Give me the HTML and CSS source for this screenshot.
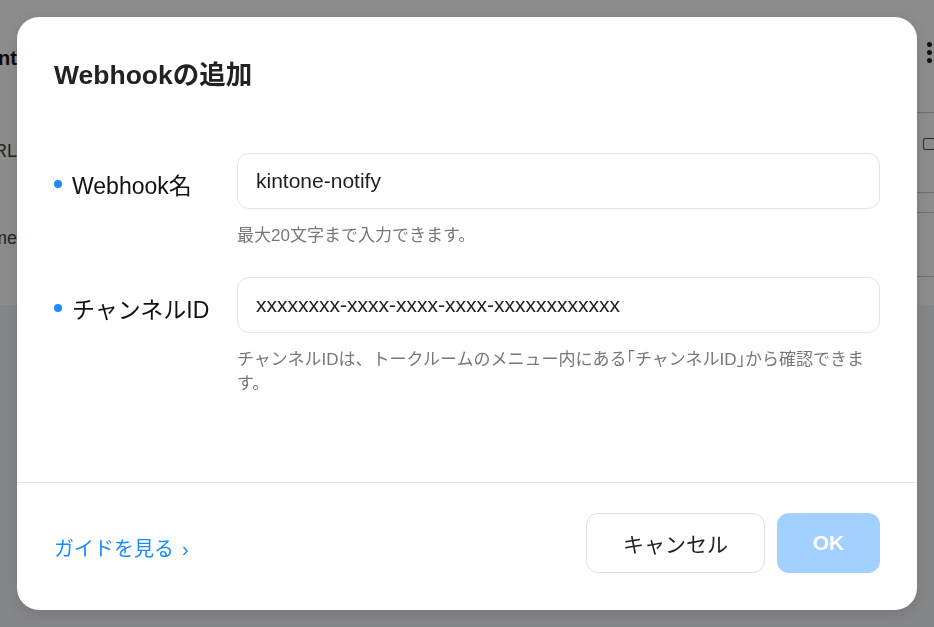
FILE: index.html
```html
<!DOCTYPE html>
<html lang="ja">
<head>
    <meta charset="UTF-8">
    <meta name="viewport" content="width=device-width, initial-scale=1.0">
    <title>Webhookの追加</title>
    <link rel="stylesheet" href="styles.css">
</head>
<body>
    <div class="page">
        <div class="page-card">
            <div class="side side-left">
                <div class="cell cell-head"><span class="page-title">Account</span></div>
                <div class="cell cell-row"><span>URL</span></div>
                <div class="cell cell-row2"><span>Name</span></div>
            </div>
            <div class="side side-right">
                <div class="r-head"><span class="kebab"><i></i><i></i><i></i></span></div>
                <div class="r-row"><span class="copy-icon"></span></div>
                <div class="r-gap"></div>
                <div class="r-row3"></div>
            </div>
        </div>
    </div>

    <div class="overlay">
        <div class="modal">
            <div class="modal-header">
                <h1>Webhookの追加</h1>
            </div>
            <div class="modal-body">
                <div class="field">
                    <label class="field-label"><span class="dot"></span>Webhook名</label>
                    <div class="field-control">
                        <input type="text" value="kintone-notify">
                        <p class="hint">最大20文字まで入力できます。</p>
                    </div>
                </div>
                <div class="field">
                    <label class="field-label"><span class="dot"></span>チャンネルID</label>
                    <div class="field-control">
                        <input type="text" value="xxxxxxxx-xxxx-xxxx-xxxx-xxxxxxxxxxxx">
                        <p class="hint">チャンネルIDは、トークルームのメニュー内にある｢チャンネルID｣から確認できます。</p>
                    </div>
                </div>
            </div>
            <div class="modal-footer">
                <a href="#" class="guide-link">ガイドを見る<span class="chev">›</span></a>
                <div class="actions">
                    <button class="btn btn-cancel">キャンセル</button>
                    <button class="btn btn-ok" disabled>OK</button>
                </div>
            </div>
        </div>
    </div>
</body>
</html>
```

FILE: styles.css
```css
* {
    box-sizing: border-box;
}
body {
    margin: 0;
    height: 627px;
    overflow: hidden;
    background: #f3f4f7;
    font-family: "Liberation Sans", "Noto Sans CJK JP", sans-serif;
    color: #1e1e1e;
}
.page {
    height: 100%;
}
.page-card {
    height: 305px;
    background: #fff;
    display: flex;
    justify-content: space-between;
}
.side {
    width: 17px;
    overflow: hidden;
}
.cell {
    display: flex;
    justify-content: flex-end;
    white-space: nowrap;
    font-size: 18px;
    color: #444;
}
.cell-head {
    height: 113px;
    padding-top: 47px;
}
.page-title {
    font-weight: bold;
    font-size: 20px;
    color: #1a1a1a;
}
.cell-row {
    height: 87px;
    padding-top: 28px;
}
.cell-row2 {
    padding-top: 28px;
}
.r-head {
    height: 113px;
    border-bottom: 1px solid #ccc;
    padding: 42px 0 0 10px;
}
.kebab i {
    display: block;
    width: 5px;
    height: 5px;
    margin-bottom: 3px;
    border-radius: 50%;
    background: #222;
}
.r-row {
    height: 80px;
    border-bottom: 1px solid #ccc;
    padding: 25px 0 0 6px;
}
.copy-icon {
    display: block;
    width: 12px;
    height: 12px;
    border: 1.5px solid #444;
    border-radius: 2px;
}
.r-gap {
    height: 20px;
    border-bottom: 1px solid #ccc;
}
.r-row3 {
    height: 64px;
    border-bottom: 1px solid #ccc;
}

.overlay {
    position: fixed;
    inset: 0;
    background: rgba(0, 0, 0, 0.45);
    display: flex;
    justify-content: center;
    align-items: center;
}
.modal {
    width: 900px;
    height: 593px;
    background: #fff;
    border-radius: 22px;
    display: flex;
    flex-direction: column;
    box-shadow: 0 4px 16px rgba(0, 0, 0, 0.12);
}
.modal-header {
    padding: 42px 37px 0;
}
.modal-header h1 {
    margin: 0;
    font-size: 26.5px;
    line-height: 32px;
    font-weight: bold;
    color: #222;
}
.modal-body {
    flex: 1;
    padding: 62px 37px 0;
    display: flex;
    flex-direction: column;
    gap: 29px;
}
.field {
    display: flex;
}
.field-label {
    width: 183px;
    height: 56px;
    display: flex;
    align-items: center;
    padding-top: 6px;
    font-size: 23px;
    color: #111;
}
.dot {
    width: 8px;
    height: 8px;
    border-radius: 50%;
    background: #1a8cff;
    margin-right: 10px;
}
.field-control {
    flex: 1;
}
.field-control input {
    display: block;
    width: 100%;
    height: 56px;
    padding: 0 18px;
    border: 1px solid #e3e3e3;
    border-radius: 12px;
    font-family: inherit;
    font-size: 21px;
    color: #1e1e1e;
    outline: none;
}
.hint {
    margin: 15px 0 0;
    font-size: 17px;
    line-height: 24px;
    color: #777;
}
.modal-footer {
    border-top: 1px solid #e6e6e6;
    padding: 30px 37px 37px;
    display: flex;
    justify-content: space-between;
    align-items: center;
}
.guide-link {
    padding-top: 8px;
    font-size: 20px;
    color: #1a8cff;
    text-decoration: none;
}
.chev {
    margin-left: 8px;
}
.actions {
    display: flex;
    gap: 12px;
}
.btn {
    height: 60px;
    border-radius: 12px;
    font-family: inherit;
    font-size: 21px;
    cursor: pointer;
}
.btn-cancel {
    width: 179px;
    background: #fff;
    border: 1px solid #e0e0e0;
    color: #222;
}
.btn-ok {
    width: 103px;
    border: none;
    background: #a3d1ff;
    color: #fff;
    font-weight: bold;
}
```
